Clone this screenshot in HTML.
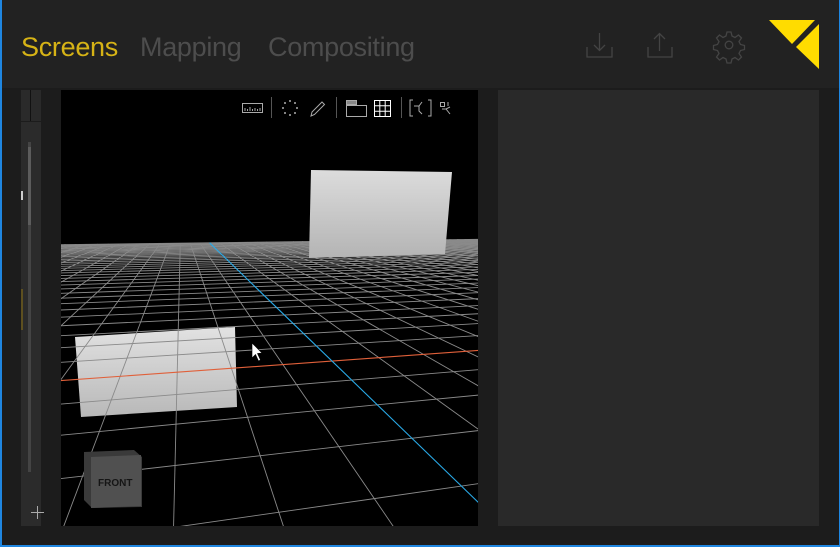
<!DOCTYPE html>
<html><head><meta charset="utf-8"><style>
*{margin:0;padding:0;box-sizing:border-box}
html,body{width:840px;height:547px;overflow:hidden}
body{background:#1c1c1c;position:relative;font-family:"Liberation Sans",sans-serif}
.frame{position:absolute;left:0;top:0;width:840px;height:547px;border-left:2px solid #1f86e0;border-bottom:2px solid #1f86e0;border-right:1px solid #1f86e0;pointer-events:none}
.hdr{position:absolute;left:0;top:0;width:840px;height:88px;background:#222}
.tab{position:absolute;top:31px;font-size:27px;line-height:32px;color:#4d4d4d;letter-spacing:-0.3px;white-space:nowrap}
.abs{position:absolute}
</style></head><body>
<div class="hdr"></div>
<div class="tab" style="left:21px;color:#d6b316">Screens</div>
<div class="tab" style="left:140px">Mapping</div>
<div class="tab" style="left:268px">Compositing</div>
<svg class="abs" style="left:0;top:0" width="840" height="88">
<g stroke="#444" stroke-width="1.3" fill="none">
<path d="M587 47V57H612V47M599.5 33V50M594 45L599.5 50.5L605 45"/>
<path d="M648 47V57H672V47M659.5 34V51M654 39L659.5 33.5L665 39"/>
<path d="M727 32h4l1 4 3 1.5 3.5-2.5 3 3-2.5 3.5 1.5 3 4 1v4l-4 1-1.5 3 2.5 3.5-3 3-3.5-2.5-3 1.5-1 4h-4l-1-4-3-1.5-3.5 2.5-3-3 2.5-3.5-1.5-3-4-1v-4l4-1 1.5-3-2.5-3.5 3-3 3.5 2.5 3-1.5z"/>
<circle cx="729" cy="45" r="3.8"/>
</g>
<polygon points="769,20 815,20 792,44" fill="#ffdc00"/>
<polygon points="819,24 819,69 796,47" fill="#ffdc00"/>
</svg>
<div class="abs" style="left:21px;top:90px;width:20px;height:31px;background:#2a2a2a"></div>
<div class="abs" style="left:30px;top:90px;width:1px;height:31px;background:#111"></div>
<div class="abs" style="left:21px;top:122px;width:20px;height:404px;background:#2b2b2b"></div>
<div class="abs" style="left:28px;top:142px;width:3px;height:330px;background:#444"></div>
<div class="abs" style="left:28px;top:147px;width:3px;height:78px;background:#5c5c5c"></div>
<div class="abs" style="left:21px;top:191px;width:2px;height:9px;background:#ccc"></div>
<div class="abs" style="left:21px;top:289px;width:2px;height:41px;background:#5e5020"></div>
<div class="abs" style="left:31px;top:512px;width:13px;height:1px;background:#aaa"></div>
<div class="abs" style="left:37px;top:506px;width:1px;height:13px;background:#aaa"></div>
<div class="abs" style="left:498px;top:90px;width:321px;height:436px;background:#292929"></div>
<svg id="vp" class="abs" style="left:61px;top:90px;background:#000" width="417" height="436" viewBox="61 90 417 436">
<defs>
<linearGradient id="g1" x1="0" y1="0" x2="0" y2="1"><stop offset="0" stop-color="#e2e2e2"/><stop offset="1" stop-color="#b8b8b8"/></linearGradient>
<linearGradient id="g2" x1="0" y1="0" x2="0" y2="1"><stop offset="0" stop-color="#dcdcdc"/><stop offset="1" stop-color="#b4b4b4"/></linearGradient>
</defs>
<polygon points="75,337 235,327 237,407 81,417" fill="url(#g1)"/>
<g id="grid"></g>
<polygon points="311,170 452,172 445,254 309,258" fill="url(#g2)"/>
<polygon points="84,452 134,450 142,457 142,507 92,508 84,500" fill="#3a3a3a"/>
<polygon points="91,457 141,455 141,506 91,508" fill="#505050"/>
<text x="98" y="486" font-size="10" font-weight="bold" fill="#151515" font-family="Liberation Sans,sans-serif">FRONT</text>
<path d="M252 343V358L255.5 354.5L258.5 361L260.5 360L257.5 353.5L262 353Z" fill="#fff" stroke="#000" stroke-width="0.6"/>
<g stroke="#aaa" fill="none" stroke-width="1">
<rect x="242.5" y="103.5" width="20" height="9"/>
<path d="M245 111v-3M247.5 111v-2M250 111v-4M252.5 111v-2M255 111v-3M257.5 111v-2M260 111v-3"/>
<path d="M271.5 97v21M336.5 97v21M401.5 97v21" stroke="#555"/>
<path d="M311 116l1-4 10-10 2.5 2.5-10 10z"/>
<rect x="346.5" y="100.5" width="10" height="4" fill="#888"/>
<rect x="346.5" y="105.5" width="20" height="11"/>
<path d="M374.5 100.5h16v16h-16zM379.8 100.5v16M385.2 100.5v16M374.5 105.8h16M374.5 111.2h16" stroke="#fff"/>
<path d="M413 100h-3v16h3M428 100h3v16h-3M414 106h5l3-4M419 106v5l3 3"/>
<path d="M440.5 102.5h4v4h-4zM442 109h4l4-2M446 109l4 5M448 102v4"/>
</g>
<g fill="#aaa"><circle cx="290" cy="101" r="1"/><circle cx="295" cy="103" r="1"/><circle cx="297" cy="108" r="1"/><circle cx="295" cy="113" r="1"/><circle cx="290" cy="115" r="1"/><circle cx="285" cy="113" r="1"/><circle cx="283" cy="108" r="1"/><circle cx="285" cy="103" r="1"/></g>
</svg>
<div class="frame"></div>
<script>
(function(){
var cx=269,cy=308,F=418,phi=Math.asin(0.217),al=Math.atan(88/428),H=4.8,N=64,S=1.7,M=Math.floor(N/S);
var sa=Math.sin(al),ca=Math.cos(al),sp=Math.sin(phi),cp=Math.cos(phi);
var r=[ca,0,-sa],f=[sa*cp,-sp,ca*cp],d=[-sp*sa,-cp,-sp*ca];
function dot(a,b){return a[0]*b[0]+a[1]*b[1]+a[2]*b[2]}
var u0=332,v0=361;
var dir=[0,1,2].map(function(k){return r[k]*(u0-cx)/F+d[k]*(v0-cy)/F+f[k]});
var t=H/-dir[1];var G=[dir[0]*t,0,dir[2]*t];
function cam(X,Z){var q=[G[0]+X,-H,G[2]+Z];return [dot(q,r),dot(q,d),dot(q,f)]}
var out='';
function seg(a,b,col,w){
 var A=cam(a[0],a[1]),B=cam(b[0],b[1]),n=0.2;
 if(A[2]<n&&B[2]<n)return;
 if(A[2]<n){var k=(n-A[2])/(B[2]-A[2]);A=[A[0]+k*(B[0]-A[0]),A[1]+k*(B[1]-A[1]),n]}
 if(B[2]<n){var k=(n-B[2])/(A[2]-B[2]);B=[B[0]+k*(A[0]-B[0]),B[1]+k*(A[1]-B[1]),n]}
 out+='<line x1="'+(cx+F*A[0]/A[2]).toFixed(1)+'" y1="'+(cy+F*A[1]/A[2]).toFixed(1)+'" x2="'+(cx+F*B[0]/B[2]).toFixed(1)+'" y2="'+(cy+F*B[1]/B[2]).toFixed(1)+'" stroke="'+col+'" stroke-width="'+w+'"/>';
}
var E=M*S;
for(var i=-M;i<=M;i++){
 if(i!==0){seg([i*S,-E],[i*S,E],'#8a8a8a',0.9);seg([-E,i*S],[E,i*S],'#8a8a8a',0.9);}
}
seg([-E,0],[E,0],'#e0603a',1.1);
seg([0,-E],[0,E],'#29a9e6',1.1);
document.getElementById('grid').innerHTML=out;
})();
</script>
</body></html>
